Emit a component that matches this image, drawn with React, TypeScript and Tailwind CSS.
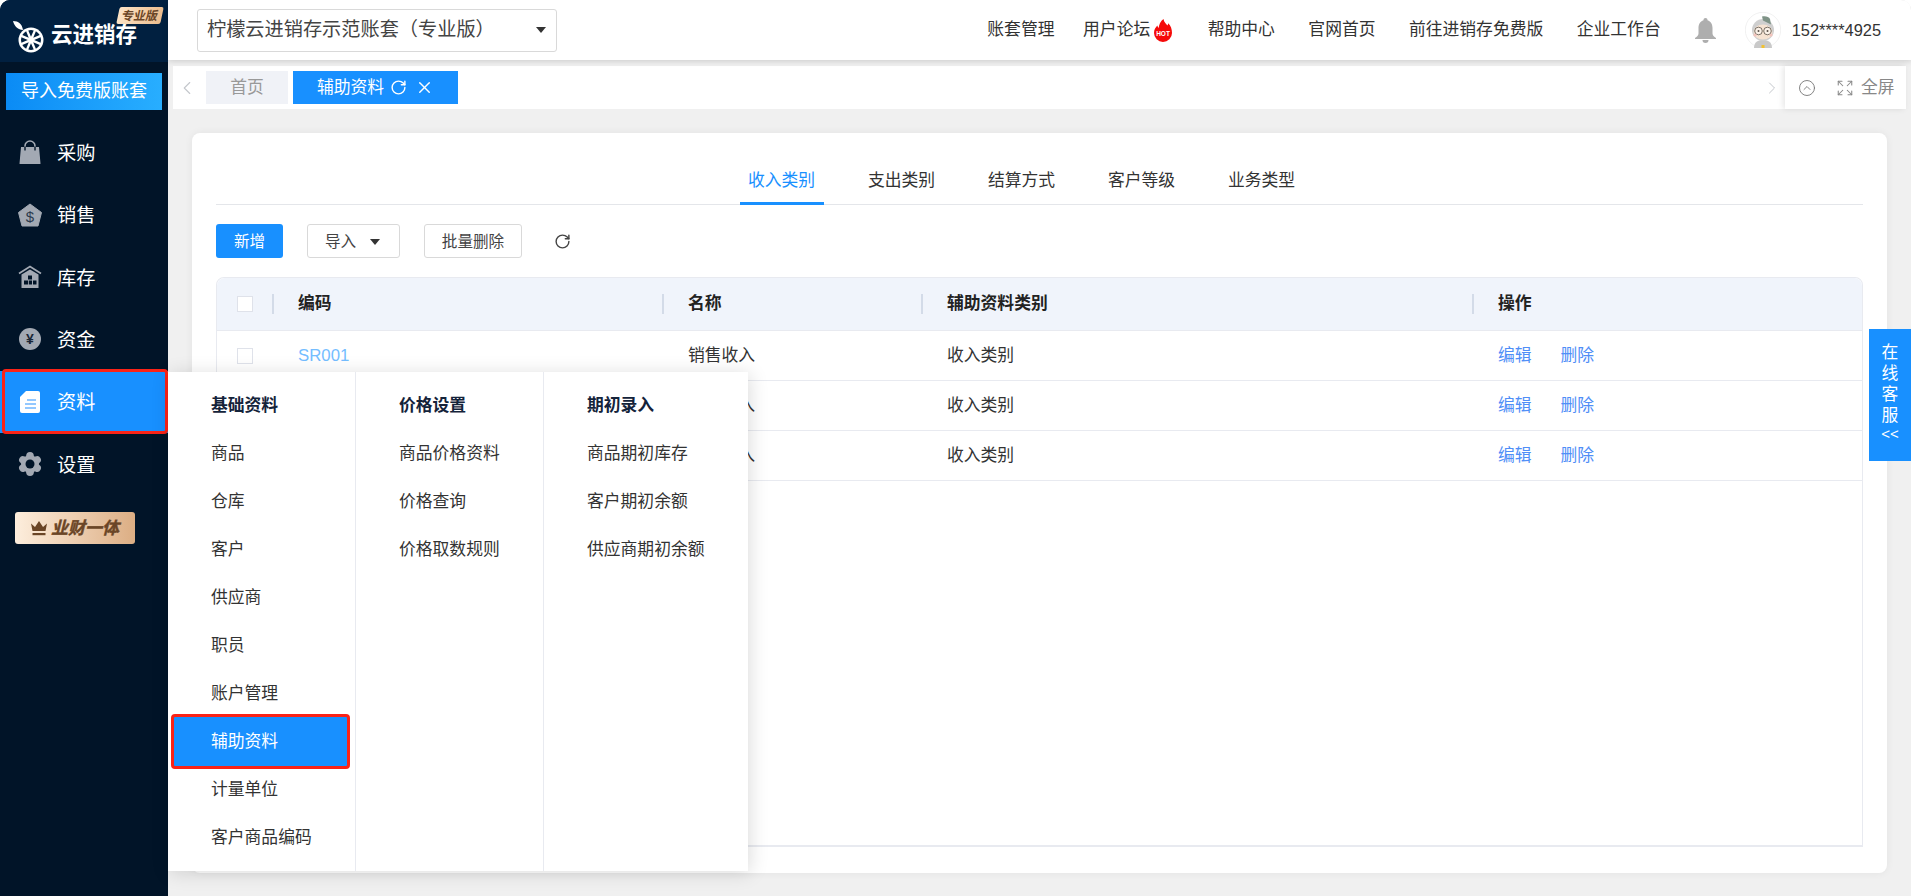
import { ChevronLeft, ChevronRight, CircleChevronUp, Expand, RotateCw, X } from "lucide-react";

function BagIcon() {
  return (
    <svg viewBox="0 0 24 24" className="size-6 fill-[#a3a9b3]">
      <path d="M7 10V6a5 5 0 0 1 10 0v4" fill="none" stroke="#a3a9b3" strokeWidth="1.6" />
      <path d="M3 7h18l1.500 16.500a.5.5 0 0 1-.5.5H2a.5.5 0 0 1-.5-.5z" />
      <path d="M7 6.500v4M17 6.500v4" stroke="#011428" strokeWidth="1.4" />
    </svg>
  );
}

function SaleIcon() {
  return (
    <svg viewBox="0 0 24 24" className="size-6">
      <path d="M12 1 23.500 9.500 20 23H4L.5 9.500z" fill="#a3a9b3" strokeLinejoin="round" stroke="#a3a9b3" />
      <text x="12" y="19" textAnchor="middle" fontSize="15" fill="#2b3a4e">$</text>
    </svg>
  );
}

function StockIcon() {
  return (
    <svg viewBox="0 0 24 24" className="size-6">
      <path d="M1 8.500 12 1.500l11 7" fill="none" stroke="#a3a9b3" strokeWidth="1.8" />
      <path d="M3.500 9.500 12 4.500l8.500 5V23h-17z" fill="#a3a9b3" />
      <path d="M10 10.500h4v4h-4zM6 15.500h4v4H6zM10.800 15.500h3.200v4h-3.200zM15 15.500h3.500v4H15z" fill="#011428" />
    </svg>
  );
}

function MoneyIcon() {
  return (
    <svg viewBox="0 0 24 24" className="size-6">
      <circle cx="12" cy="12" r="11" fill="#a3a9b3" />
      <text x="12" y="17" textAnchor="middle" fontSize="14" fontWeight="700" fill="#1a2636">¥</text>
    </svg>
  );
}

function DocIcon() {
  return (
    <svg viewBox="0 0 24 24" className="size-6">
      <path d="M8 1h12a2 2 0 0 1 2 2v18a2 2 0 0 1-2 2H4a2 2 0 0 1-2-2V7z" fill="#fff" />
      <path d="M9 10h9M7 14h11M7 18h11" stroke="#93c8ff" strokeWidth="2" />
    </svg>
  );
}

function GearIcon() {
  const angles = [0, 60, 120, 180, 240, 300];
  return (
    <svg viewBox="0 0 24 24" className="size-6">
      {angles.map((a) => (
        <circle key={a} cx="12" cy="3.800" r="3.800" fill="#a3a9b3" transform={`rotate(${a} 12 12)`} />
      ))}
      <circle cx="12" cy="12" r="9" fill="#a3a9b3" />
      <circle cx="12" cy="12" r="4.500" fill="#011428" />
    </svg>
  );
}

function Logo() {
  const angles = [0, 45, 90, 135, 180, 225, 270, 315];
  return (
    <svg viewBox="0 0 32 32" className="h-[32px] w-[32px] shrink-0">
      <path d="M0 0c5.500 0 9 3 10 9C5 8.500 1.500 5.500 0 0z" fill="#fff" />
      <circle cx="18" cy="19" r="12.500" fill="#fff" />
      <g transform="translate(18 19)">
        {angles.map((a) => (
          <path key={a} d="M0-3.200 -2.700-9.600A10 10 0 0 1 2.700-9.600z" fill="#012040" transform={`rotate(${a})`} />
        ))}
      </g>
    </svg>
  );
}

function Flame() {
  return (
    <svg viewBox="0 0 18 23" className="h-[23px] w-[18px] shrink-0">
      <path d="M9.500 0c.5 3.500 2.500 4.500 4 6.500.5-.8.6-1.400.7-2.200C16.800 7 18 10 18 14a9 9 0 0 1-18 0c0-3.600 1.800-5.400 3.300-7.400.3 1 .6 1.800 1.400 2.400C5 5.500 6.500 2 9.500 0z" fill="#f50a0a" />
      <text x="9" y="17" textAnchor="middle" fontSize="6.500" fontWeight="700" fill="#fff">HOT</text>
    </svg>
  );
}

function Bell() {
  return (
    <svg viewBox="0 0 21 25" className="h-[25px] w-[21px] shrink-0 fill-[#aeaeae]">
      <path d="M10.500 0a2 2 0 0 1 2 2.200C16 3.200 17.500 6.500 17.500 10v5.500c0 2 1.500 3 3.500 4.500v1H0v-1c2-1.500 3.500-2.500 3.500-4.500V10c0-3.500 1.500-6.800 5-7.800a2 2 0 0 1 2-2.200z" />
      <path d="M7.500 22h6a3 3 0 0 1-6 0z" />
    </svg>
  );
}

function Avatar() {
  return (
    <svg viewBox="0 0 36 36" className="size-9 shrink-0">
      <circle cx="18" cy="18" r="17.700" fill="#fff" stroke="#e8e8e8" strokeWidth=".6" />
      <path d="M9 36c0-6 4-8 9-8s9 2 9 8z" fill="#c9c9c9" />
      <circle cx="18" cy="18" r="11" fill="#cfcfcf" />
      <path d="M17 4.500c3-.8 7 0 8 2.500l1 5.500-8-4z" fill="#7f9387" />
      <ellipse cx="18" cy="20" rx="9.500" ry="7.500" fill="#f6e3d3" />
      <circle cx="13.500" cy="19" r="3.800" fill="#fbf1e8" stroke="#6b6258" strokeWidth=".9" />
      <circle cx="22.500" cy="19" r="3.800" fill="#fbf1e8" stroke="#6b6258" strokeWidth=".9" />
      <circle cx="13.500" cy="19" r="1" fill="#5c5249" />
      <circle cx="22.500" cy="19" r="1" fill="#5c5249" />
      <circle cx="10" cy="23" r="1.600" fill="#f3c4bd" />
      <circle cx="26" cy="23" r="1.600" fill="#f3c4bd" />
      <rect x="16.500" y="33" width="3" height="3" fill="#f2c230" />
    </svg>
  );
}

function Crown() {
  return (
    <svg viewBox="0 0 16 15" className="h-[15px] w-[16px] shrink-0 fill-[#6a4526]">
      <path d="M0 2.500 4 6 8 0l4 6 4-3.500L14.500 10h-13z" />
      <path d="M1.500 12h13v2.200h-13z" />
    </svg>
  );
}

const navItems = [
  { label: "采购", icon: <BagIcon /> },
  { label: "销售", icon: <SaleIcon /> },
  { label: "库存", icon: <StockIcon /> },
  { label: "资金", icon: <MoneyIcon /> },
  { label: "资料", icon: <DocIcon />, active: true },
  { label: "设置", icon: <GearIcon /> },
];

const topLinks = ["帮助中心", "官网首页", "前往进销存免费版", "企业工作台"];
const cardTabs = ["收入类别", "支出类别", "结算方式", "客户等级", "业务类型"];

const rows = [
  { code: "SR001", name: "销售收入" },
  { code: "SR002", name: "其他收入" },
  { code: "SR003", name: "利息收入" },
];

const menuColumns = [
  {
    title: "基础资料",
    width: "w-[188px]",
    items: ["商品", "仓库", "客户", "供应商", "职员", "账户管理", "辅助资料", "计量单位", "客户商品编码"],
  },
  { title: "价格设置", width: "w-[188px]", items: ["商品价格资料", "价格查询", "价格取数规则"] },
  { title: "期初录入", width: "w-[204px]", items: ["商品期初库存", "客户期初余额", "供应商期初余额"] },
];

function Checkbox() {
  return <span className="ml-[20px] block size-4 border border-[#dfe2ea] bg-white" />;
}

function Sidebar() {
  return (
    <aside className="flex w-[168px] shrink-0 flex-col bg-[#011428]">
      <div className="relative flex h-[62px] items-start gap-[6px] bg-[#012040] pl-[13px] pt-[21px]">
        <Logo />
        <span className="mt-[-2px] text-[21.5px] leading-[32px] font-bold whitespace-nowrap text-white">云进销存</span>
        <span className="absolute left-[118px] top-[7px] flex h-[17px] w-[44px] -skew-x-12 items-center justify-center rounded-[2px] bg-gradient-to-r from-[#fce3c6] to-[#ecbd8e] text-[12px] font-bold text-[#6a4526]">
          专业版
        </span>
      </div>
      <button className="mx-[6px] mt-[11px] h-[37px] bg-gradient-to-r from-[#0a8bf5] to-[#28aeff] text-[18px] whitespace-nowrap text-white">
        导入免费版账套
      </button>
      <nav className="mt-[11px] flex flex-col">
        {navItems.map((item) => (
          <div
            key={item.label}
            className={`relative flex h-[62.4px] items-center gap-[15px] pl-[18px] text-[19.2px] text-white ${item.active ? "bg-[#1890ff]" : ""}`}
          >
            {item.icon}
            <span className="mt-[4px]">{item.label}</span>
            {item.active && (
              <span className="absolute -top-[2px] -bottom-[1px] left-[2px] right-0 rounded-[4px] border-[3px] border-[#fb2317]" />
            )}
          </div>
        ))}
      </nav>
      <div className="ml-[15px] mt-[17px] flex h-[32px] w-[120px] items-center justify-center gap-[4px] rounded-[3px] bg-gradient-to-r from-[#fdeedd] to-[#dcae84] text-[17px] font-bold whitespace-nowrap text-[#6a4526] italic [-webkit-text-stroke:0.4px_#6a4526]">
        <Crown />
        <span>业财一体</span>
      </div>
    </aside>
  );
}

function TopBar() {
  return (
    <header className="relative flex h-[60px] shrink-0 items-center bg-white pl-[29px] text-[16.8px] text-[#333] shadow-[0_1px_6px_rgba(0,0,0,0.16)]">
      <div className="flex h-[43px] w-[360px] items-center justify-between rounded-[3px] border border-[#d9d9d9] pl-[9px] pr-[10px] text-[19.2px] text-[#444]">
        <span className="whitespace-nowrap">柠檬云进销存示范账套（专业版）</span>
        <span className="h-0 w-0 border-x-[5px] border-t-[6px] border-x-transparent border-t-[#333]" />
      </div>
      <div className="ml-auto flex items-center pr-[30px]">
        <a className="mr-[28.600px]">账套管理</a>
        <a>用户论坛</a>
        <span className="ml-[4px] mr-[35.500px]"><Flame /></span>
        <div className="flex items-center gap-[33.500px]">
          {topLinks.map((t) => (
            <a key={t} className="whitespace-nowrap">{t}</a>
          ))}
        </div>
        <span className="ml-[34px]"><Bell /></span>
        <span className="ml-[29px]"><Avatar /></span>
        <span className="ml-[11px] text-[16.4px] whitespace-nowrap">152****4925</span>
      </div>
    </header>
  );
}

function TabsBar() {
  return (
    <div className="mx-[5px] mt-[6px] flex h-[43px] shrink-0 items-center bg-white">
      <ChevronLeft className="ml-[3px] size-[22px] text-[#c4c7cc]" strokeWidth={1.2} />
      <span className="ml-[8px] flex h-[33px] w-[82px] items-center justify-center bg-[#f0f2f7] text-[16.8px] text-[#999]">首页</span>
      <span className="ml-[5px] flex h-[33px] w-[165px] items-center justify-center gap-[6px] bg-[#1890ff] text-[16.8px] text-white">
        辅助资料
        <RotateCw className="size-[17px]" strokeWidth={2} />
        <X className="ml-[2px] size-[19px]" strokeWidth={1.8} />
      </span>
      <ChevronRight className="ml-auto mr-[3px] size-[20px] text-[#c4c7cc]" strokeWidth={1.2} />
      <div className="flex h-full w-[121px] shrink-0 items-center gap-[20px] pl-[13px] text-[16.8px] text-[#888] shadow-[-2px_0_6px_rgba(0,0,0,0.1)]">
        <CircleChevronUp className="size-[18px] text-[#777]" strokeWidth={1.2} />
        <span className="flex items-center gap-[7px] whitespace-nowrap">
          <Expand className="size-[18px]" strokeWidth={1.4} />
          全屏
        </span>
      </div>
    </div>
  );
}

function DataTable() {
  return (
    <div className="mt-[19px] h-[570px] rounded-t-lg border border-b-2 border-[#e8eaf0] text-[16.8px] text-[#333]">
      <div className="grid h-[53px] grid-cols-[55px_390px_259px_551px_1fr] items-center rounded-t-lg border-b border-[#e8eaf0] bg-[#f0f4fb] font-bold text-[#222]">
        <Checkbox />
        {["编码", "名称", "辅助资料类别", "操作"].map((h) => (
          <div key={h} className="flex items-center">
            <span className="h-[20px] w-[2px] bg-[#d3dbe8]" />
            <span className="ml-[24px]">{h}</span>
          </div>
        ))}
      </div>
      {rows.map((r) => (
        <div key={r.code} className="grid h-[50px] grid-cols-[55px_390px_259px_551px_1fr] items-center border-b border-[#e8eaf0]">
          <Checkbox />
          <span className="pl-[26px] text-[#74bdff]">{r.code}</span>
          <span className="pl-[26px]">{r.name}</span>
          <span className="pl-[26px]">收入类别</span>
          <span className="flex gap-[29px] pl-[26px] text-[#4f8ef7]">
            <a>编辑</a>
            <a>删除</a>
          </span>
        </div>
      ))}
    </div>
  );
}

function ContentCard() {
  return (
    <section className="ml-[24px] mt-[24px] h-[740px] w-[1695px] rounded-lg bg-white px-[24px] shadow-[0_0_8px_rgba(0,0,0,0.06)]">
      <div className="flex h-[72px] items-end gap-[36px] border-b border-[#e4e6ea] pl-[523.500px] text-[16.8px] text-[#333]">
        {cardTabs.map((t, i) => (
          <span
            key={t}
            className={`-mb-px flex h-[47px] w-[84px] justify-center pt-[10px] whitespace-nowrap ${i === 0 ? "border-b-[3px] border-[#1890ff] text-[#1890ff]" : ""}`}
          >
            {t}
          </span>
        ))}
      </div>
      <div className="mt-[19px] flex h-[34px] items-center text-[15.6px]">
        <button className="h-full w-[67px] rounded-[3px] bg-[#1890ff] pt-[2px] text-white">新增</button>
        <button className="ml-[24px] flex h-full w-[93px] items-center justify-center gap-[14px] rounded-[3px] border border-[#d9d9d9] pr-[2px] pt-[2px] text-[#444]">
          导入
          <span className="h-0 w-0 border-x-[5px] border-t-[6px] border-x-transparent border-t-[#333]" />
        </button>
        <button className="ml-[24px] h-full w-[98px] rounded-[3px] border border-[#d9d9d9] pt-[2px] text-[#444]">批量删除</button>
        <RotateCw className="ml-[32px] size-[17px] text-[#444]" strokeWidth={2} />
      </div>
      <DataTable />
    </section>
  );
}

function PopupMenu() {
  return (
    <div className="absolute left-[168px] top-[372px] flex h-[499px] w-[580px] bg-white text-[16.8px] text-[#333] shadow-[2px_2px_18px_rgba(0,0,0,0.14)]">
      {menuColumns.map((col, i) => (
        <div key={col.title} className={`${col.width} shrink-0 pt-[10px] ${i < 2 ? "border-r border-[#e8eaf0]" : ""}`}>
          <div className="flex h-[48px] items-center pl-[43px] font-bold text-[#14233a]">{col.title}</div>
          {col.items.map((item) =>
            item === "辅助资料" ? (
              <div
                key={item}
                className="-mb-[3px] -mt-[4px] ml-[3px] mr-[5px] flex h-[55px] items-center rounded-[4px] border-[3px] border-[#fb2317] bg-[#1890ff] pl-[37px] text-white"
              >
                {item}
              </div>
            ) : (
              <div key={item} className="flex h-[48px] items-center pl-[43px] whitespace-nowrap">{item}</div>
            )
          )}
        </div>
      ))}
    </div>
  );
}

export default function App() {
  return (
    <div className="relative flex h-[896px] w-[1911px] overflow-hidden rounded-t-[10px] bg-[#f0f0f0] [font-family:'Liberation_Sans','Noto_Sans_CJK_SC',sans-serif]">
      <Sidebar />
      <main className="flex min-w-0 flex-1 flex-col">
        <TopBar />
        <TabsBar />
        <ContentCard />
      </main>
      <PopupMenu />
      <div className="absolute right-0 top-[329px] flex h-[132px] w-[42px] flex-col items-center bg-[#1890ff] pt-[13px] text-[16.8px] leading-[21px] text-white">
        <span>在</span>
        <span>线</span>
        <span>客</span>
        <span>服</span>
        <span className="text-[15px] leading-[16px]">{"<<"}</span>
      </div>
    </div>
  );
}
